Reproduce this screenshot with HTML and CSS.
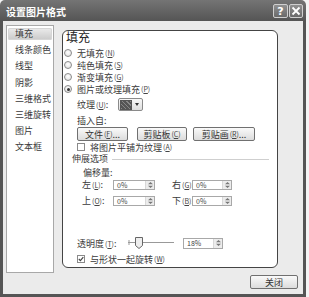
FILE: index.html
```html
<!DOCTYPE html>
<html>
<head>
<meta charset="utf-8">
<meta name="viewport" content="width=device-width, initial-scale=1">
<link rel="stylesheet" href="styles.css">
</head>
<body>
<div class="window">
  <div class="titlebar">
    <span class="title">设置图片格式</span>
    <div class="caption">
      <span class="cbtn help">?</span>
      <span class="cbtn">
        <svg width="10" height="10" viewBox="0 0 10 10"><path d="M1.5 1.5 L8.5 8.5 M8.5 1.5 L1.5 8.5" stroke="#fff" stroke-width="1.8"/></svg>
      </span>
    </div>
  </div>

  <div class="client">
    <div class="main">
      <ul class="nav">
        <li class="sel">填充</li>
        <li>线条颜色</li>
        <li>线型</li>
        <li>阴影</li>
        <li>三维格式</li>
        <li>三维旋转</li>
        <li>图片</li>
        <li>文本框</li>
      </ul>

      <div class="panel">
        <div class="heading">填充</div>

        <div class="radios">
          <div class="row radio"><span class="dot"></span>无填充<span class="key">(<u>N</u>)</span></div>
          <div class="row radio"><span class="dot"></span>纯色填充<span class="key">(<u>S</u>)</span></div>
          <div class="row radio"><span class="dot"></span>渐变填充<span class="key">(<u>G</u>)</span></div>
          <div class="row radio"><span class="dot on"></span>图片或纹理填充<span class="key">(<u>P</u>)</span></div>
        </div>

        <div class="row ind texture">
          <span class="lbl-tex">纹理<span class="key">(<u>U</u>)</span>:</span>
          <span class="texbtn"><span class="swatch"></span><span class="arrow"></span></span>
        </div>

        <div class="row ind insert">插入自:</div>

        <div class="row ind btns">
          <span class="btn b-file">文件<span class="key">(<u>F</u>)</span>...</span>
          <span class="btn b-clip">剪贴板<span class="key">(<u>C</u>)</span></span>
          <span class="btn b-art">剪贴画<span class="key">(<u>R</u>)</span>...</span>
        </div>

        <div class="row ind check-row"><span class="box"></span>将图片平铺为纹理<span class="key">(<u>A</u>)</span></div>

        <div class="row stretch"><span>伸展选项</span><span class="rule"></span></div>

        <div class="row offset">偏移量:</div>

        <div class="row offs first">
          <span class="lbl-l">左<span class="key">(<u>L</u>)</span>:</span>
          <span class="spin w42"><span class="val">0%</span><span class="arrows"><svg width="7" height="8" viewBox="0 0 7 8"><path d="M1 3.2 L3.5 1 L6 3.2 Z M1 4.8 L3.5 7 L6 4.8 Z" fill="#777"/></svg></span></span>
          <span class="lbl-r">右<span class="key">(<u>G</u>)</span>:</span>
          <span class="spin w40"><span class="val">0%</span><span class="arrows"><svg width="7" height="8" viewBox="0 0 7 8"><path d="M1 3.2 L3.5 1 L6 3.2 Z M1 4.8 L3.5 7 L6 4.8 Z" fill="#777"/></svg></span></span>
        </div>

        <div class="row offs second">
          <span class="lbl-l">上<span class="key">(<u>O</u>)</span>:</span>
          <span class="spin w42"><span class="val">0%</span><span class="arrows"><svg width="7" height="8" viewBox="0 0 7 8"><path d="M1 3.2 L3.5 1 L6 3.2 Z M1 4.8 L3.5 7 L6 4.8 Z" fill="#777"/></svg></span></span>
          <span class="lbl-r">下<span class="key">(<u>B</u>)</span>:</span>
          <span class="spin w40"><span class="val">0%</span><span class="arrows"><svg width="7" height="8" viewBox="0 0 7 8"><path d="M1 3.2 L3.5 1 L6 3.2 Z M1 4.8 L3.5 7 L6 4.8 Z" fill="#777"/></svg></span></span>
        </div>

        <div class="row ind opacity">
          <span class="lbl-op">透明度<span class="key">(<u>T</u>)</span>:</span>
          <svg class="slider" width="47" height="14" viewBox="0 0 47 14">
            <path d="M0 6.5 H46" stroke="#999" stroke-width="1"/>
            <path d="M0 7.5 H46" stroke="#fff" stroke-width="1"/>
            <path d="M1 4 V9" stroke="#999" stroke-width="1"/>
            <path d="M7.5 1.5 H14.5 V9.5 L11 12.5 L7.5 9.5 Z" fill="#eee" stroke="#666" stroke-width="1"/>
          </svg>
          <span class="spin w40 tall"><span class="val">18%</span><span class="arrows"><svg width="7" height="8" viewBox="0 0 7 8"><path d="M1 3.2 L3.5 1 L6 3.2 Z M1 4.8 L3.5 7 L6 4.8 Z" fill="#777"/></svg></span></span>
        </div>

        <div class="row ind check-row rotate">
          <span class="box"><svg width="6" height="6" viewBox="0 0 6 6"><path d="M0.8 3 L2.4 4.6 L5.3 1.2" fill="none" stroke="#444" stroke-width="1.2"/></svg></span>与形状一起旋转<span class="key">(<u>W</u>)</span>
        </div>
      </div>
    </div>

    <div class="footer">
      <span class="btn closebtn">关闭</span>
    </div>
  </div>
</div>
</body>
</html>
```

FILE: styles.css
```css
* {box-sizing: border-box;}

html, body {
  margin: 0;
  padding: 0;
  background: #f4f4f4;
}

body {
  font-family: "Noto Sans CJK SC", "DejaVu Sans", sans-serif;
  font-size: 9px;
  color: #3a3a3a;
}

.window {
  width: 306px;
  height: 297px;
  display: flex;
  flex-direction: column;
}

/* title bar */
.titlebar {
  height: 21px;
  background: linear-gradient(#747474, #555);
  border-radius: 5px 5px 0 0;
  display: flex;
  justify-content: space-between;
  padding: 0 3px 0 6px;
}

.title {
  color: #fff;
  font-weight: bold;
  font-size: 10px;
  line-height: 12px;
  margin-top: 6px;
}

.caption {
  display: flex;
  gap: 1px;
  margin-top: 4px;
}

.cbtn {
  width: 14px;
  height: 14px;
  border: 1px solid #cfcfcf;
  border-radius: 2px;
  background: linear-gradient(#909090, #6a6a6a);
  color: #fff;
  display: flex;
  align-items: center;
  justify-content: center;
  font: bold 11px "DejaVu Sans", sans-serif;
}

.cbtn.help {width: 15px;}

/* client area */
.client {
  flex: 1;
  border: 3px solid #555;
  border-top: none;
  background: #ebebeb;
  padding: 4px 5px 3px 3px;
  display: flex;
  flex-direction: column;
}

.main {
  display: flex;
  height: 248px;
}

.nav {
  list-style: none;
  margin: 0;
  padding: 2px 0 0 0;
  width: 48px;
  height: 248px;
  background: #fff;
  border: 1px solid #a8a8a8;
}

.nav li {
  height: 12px;
  line-height: 12px;
  margin: 0 1px 4.2px 1px;
  padding-left: 7px;
  white-space: nowrap;
}

.nav li.sel {
  background: linear-gradient(#ececec, #c9c9c9);
  border-radius: 2px;
  box-shadow: inset 0 0 0 1px #d6d6d6;
}

.panel {
  margin: 5px 0 0 8px;
  width: 216px;
  height: 238px;
  background: #fff;
  border: 1px solid #444;
  border-radius: 6px;
  display: flex;
  flex-direction: column;
}

.heading {
  font-size: 12px;
  line-height: 14px;
  height: 14px;
  padding-left: 3px;
  margin-top: -1px;
  color: #222;
}

.radios {margin-top: 3px;}

.row {
  display: flex;
  align-items: center;
  height: 12px;
  white-space: nowrap;
}

.key {
  font-size: 7px;
  margin-left: 1px;
  color: #444;
}

.radio {padding-left: 1px;}

.dot {
  width: 8px;
  height: 8px;
  border: 1px solid #8a8a8a;
  border-radius: 50%;
  background: radial-gradient(circle at 50% 40%, #fff, #dcdcdc);
  margin-right: 5px;
  display: flex;
  align-items: center;
  justify-content: center;
}

.dot.on::after {
  content: "";
  width: 3px;
  height: 3px;
  border-radius: 50%;
  background: #333;
}

.ind {padding-left: 14px;}

.texture {
  height: 13px;
  margin-top: 3px;
}

.lbl-tex {width: 41px;}

.texbtn {
  width: 25px;
  height: 13px;
  border: 1px solid #8a8a8a;
  border-radius: 2px;
  background: linear-gradient(#f8f8f8, #dedede);
  display: flex;
  align-items: center;
  padding-left: 1px;
}

.swatch {
  width: 12px;
  height: 10px;
  border: 1px solid #555;
  background:
    repeating-linear-gradient(45deg, #888 0 1px, #555 1px 3px);
}

.arrow {
  margin-left: 3px;
  width: 0;
  height: 0;
  border-left: 2.5px solid transparent;
  border-right: 2.5px solid transparent;
  border-top: 3px solid #333;
}

.insert {
  height: 11px;
  margin-top: 4px;
}

.btns {
  height: 14px;
  margin-top: 1px;
}

.btn {
  height: 14px;
  border: 1px solid #707070;
  border-radius: 2px;
  background: linear-gradient(#fafafa, #dcdcdc);
  display: flex;
  align-items: center;
  justify-content: center;
  color: #333;
}

.b-file {width: 51px;}
.b-clip {width: 50px; margin-left: 9px;}
.b-art {width: 62px; margin-left: 6px;}

.box {
  width: 8px;
  height: 8px;
  border: 1px solid #8a8a8a;
  background: #fff;
  margin-right: 5px;
  display: flex;
  align-items: center;
  justify-content: center;
}

.stretch {
  height: 11px;
  padding-left: 9px;
}

.rule {
  flex: 1;
  border-top: 1px solid #cfcfcf;
  margin: 1px 8px 0 4px;
}

.offset {
  height: 10px;
  margin-top: 3px;
  padding-left: 20px;
}

.offs {
  height: 11px;
  padding-left: 19px;
}

.offs.first {margin-top: 2px;}
.offs.second {margin-top: 5px;}

.lbl-l {width: 31px;}
.lbl-r {width: 20px; margin-left: 17px;}

.spin {
  height: 10px;
  border: 1px solid #a8a8a8;
  background: #fff;
  display: flex;
  align-items: stretch;
}

.spin.w42 {width: 42px;}
.spin.w40 {width: 40px;}
.spin.tall {height: 11px;}

.spin .val {
  flex: 1;
  font-size: 7px;
  line-height: 8px;
  padding-left: 3px;
  color: #444;
}

.spin .arrows {
  width: 9px;
  background: #ececec;
  border-left: 1px solid #d8d8d8;
  display: flex;
  align-items: center;
  justify-content: center;
}

.opacity {
  height: 14px;
  margin-top: 30px;
}

.lbl-op {width: 51px;}

.slider {margin-right: 8px;}

.rotate {margin-top: 3px;}

.footer {
  margin-top: 2px;
  display: flex;
  justify-content: flex-end;
}

.closebtn {width: 48px;}
```
